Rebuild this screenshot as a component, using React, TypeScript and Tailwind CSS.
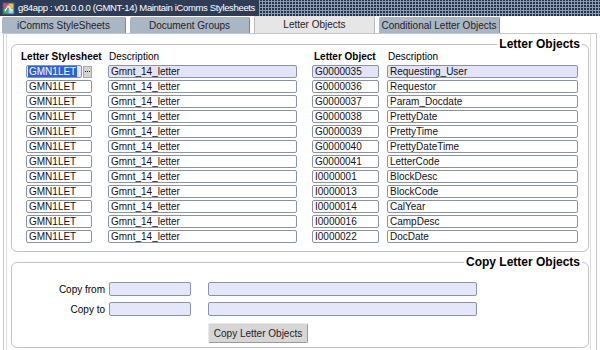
import { memo } from "react";

const rows = [
  ["G0000035", "Requesting_User"],
  ["G0000036", "Requestor"],
  ["G0000037", "Param_Docdate"],
  ["G0000038", "PrettyDate"],
  ["G0000039", "PrettyTime"],
  ["G0000040", "PrettyDateTime"],
  ["G0000041", "LetterCode"],
  ["I0000001", "BlockDesc"],
  ["I0000013", "BlockCode"],
  ["I0000014", "CalYear"],
  ["I0000016", "CampDesc"],
  ["I0000022", "DocDate"],
];

const tabs = [
  { label: "iComms StyleSheets", w: "w-[124px]", active: false },
  { label: "Document Groups", w: "w-[120px]", active: false },
  { label: "Letter Objects", w: "w-[121px]", active: true },
  { label: "Conditional Letter Objects", w: "w-[121px]", active: false },
];

const Field = ({ value, className, current }: { value: string; className: string; current?: boolean }) => (
  <div
    className={`h-[13px] rounded-[2px] border border-[#8a93a0] pl-[2px] leading-[11px] text-[10px] text-[#111] whitespace-nowrap overflow-hidden ${
      current ? "bg-[#e3e3fa]" : "bg-white"
    } ${className}`}
  >
    {value}
  </div>
);

const AppIcon = () => (
  <svg width="13" height="13" viewBox="0 0 13 13" className="shrink-0">
    <rect x="0.5" y="0.5" width="12" height="12" fill="#3c5a9a" />
    <rect x="1.5" y="1.5" width="5" height="5" fill="#e8407a" />
    <rect x="6.5" y="1.5" width="5" height="5" fill="#f2c230" />
    <rect x="1.5" y="6.5" width="5" height="5" fill="#4cb04a" />
    <rect x="6.5" y="6.5" width="5" height="5" fill="#9ad0f0" />
    <path d="M3 9 L6 4 L10 9" stroke="#fff" strokeWidth="1.2" fill="none" />
  </svg>
);

const App = () => {
  return (
    <div className="w-[600px] h-[350px] overflow-hidden bg-white flex flex-col font-['Liberation_Sans',Arial,sans-serif] text-[10px] text-black">
      {/* title bar */}
      <div className="h-[16px] flex items-center bg-[#24324a] bg-[radial-gradient(circle,#8c9bb2_1px,transparent_1.4px)] bg-[length:3px_3px]">
        <div className="h-full flex items-center gap-[3px] pl-[2px] pr-[4px] bg-[#2e3d55] text-white text-[9.5px] tracking-[-0.35px] leading-none">
          <AppIcon />
          <span>g84app : v01.0.0.0 (GMNT-14) Maintain iComms Stylesheets</span>
        </div>
      </div>

      {/* tabs */}
      <div className="h-[17px] flex items-end pl-[2px] gap-[4px]">
        {tabs.map((t) => (
          <div
            key={t.label}
            className={`${t.w} h-[16px] flex items-center justify-center text-[10px] text-[#222] rounded-t-[2px] border-r border-[#7d8896] ${
              t.active ? "bg-[#e6e6e6] h-[17px] border-l border-[#b9b9b9]" : "bg-[#aab6c4]"
            }`}
          >
            {t.label}
          </div>
        ))}
      </div>

      {/* panel */}
      <div className="flex-1 mx-[3px] border-x border-t border-[#c6c6c6] flex">
        <div className="flex-1 ml-[2px] mr-[5px] border-x border-[#dcdcdc] pl-[4px] pr-[1px] pt-[3px] flex flex-col">
          <fieldset className="rounded-[6px] border border-[#c2c2c2] pl-[1px] pb-[8px]">
            <legend className="ml-auto mr-[6px] px-[2px] text-[12px] leading-[14px] font-bold">Letter Objects</legend>
            <div className="flex h-[12px] items-center leading-none">
              <div className="w-[96px] pl-[8px] font-bold">Letter Stylesheet</div>
              <div className="w-[204px]">Description</div>
              <div className="w-[75px] pl-[1px] font-bold">Letter Object</div>
              <div>Description</div>
            </div>
            <div className="flex flex-col gap-[2px] mt-[2px] pl-[13px]">
              {rows.map(([code, desc], i) => (
                <div key={code} className="flex items-center">
                  {i === 0 ? (
                    <div className="w-[66px] flex items-center">
                      <div className="w-[56px] h-[13px] rounded-[2px] border border-[#8a93a0] bg-[#e3e3fa] pl-[1px] flex items-center">
                        <span className="bg-[#2f5fd0] text-white leading-[11px] px-[1px]">GMN1LET</span>
                      </div>
                      <div className="ml-[1px] w-[9px] h-[12px] bg-[#d4d4d4] border border-[#a8a8a8] flex items-center justify-center gap-[1px]">
                        <span className="w-[1px] h-[1px] bg-[#222]" />
                        <span className="w-[1px] h-[1px] bg-[#222]" />
                        <span className="w-[1px] h-[1px] bg-[#222]" />
                      </div>
                    </div>
                  ) : (
                    <Field value="GMN1LET" className="w-[66px]" />
                  )}
                  <Field value="Gmnt_14_letter" className="w-[189px] ml-[16px]" current={i === 0} />
                  <Field value={code} className="w-[67px] ml-[15px]" current={i === 0} />
                  <Field value={desc} className="w-[191px] ml-[8px]" current={i === 0} />
                </div>
              ))}
            </div>
          </fieldset>

          <fieldset className="mt-[3px] rounded-[6px] border border-[#c2c2c2] pl-[1px] pt-[13px] pb-[4px]">
            <legend className="ml-auto mr-[6px] px-[2px] text-[12px] leading-[14px] font-bold">Copy Letter Objects</legend>
            <div className="flex flex-col gap-[6px]">
              <div className="flex items-center h-[14px]">
                <div className="w-[92px] text-right">Copy from</div>
                <div className="ml-[4px] w-[82px] h-[14px] rounded-[2px] border border-[#8a93a0] bg-[#e6e6fa]" />
                <div className="ml-[17px] w-[269px] h-[14px] rounded-[2px] border border-[#8a93a0] bg-[#e6e6fa]" />
              </div>
              <div className="flex items-center h-[14px]">
                <div className="w-[92px] text-right">Copy to</div>
                <div className="ml-[4px] w-[82px] h-[14px] rounded-[2px] border border-[#8a93a0] bg-[#e6e6fa]" />
                <div className="ml-[17px] w-[269px] h-[14px] rounded-[2px] border border-[#8a93a0] bg-[#e6e6fa]" />
              </div>
            </div>
            <button className="mt-[7px] ml-[195px] w-[100px] h-[20px] rounded-[2px] bg-[#d6d6d6] border border-[#e8e8e8] border-b-[#9a9a9a] border-r-[#9a9a9a] text-[10px] text-[#222]">
              Copy Letter Objects
            </button>
          </fieldset>
        </div>
      </div>
    </div>
  );
};

export default memo(App);
